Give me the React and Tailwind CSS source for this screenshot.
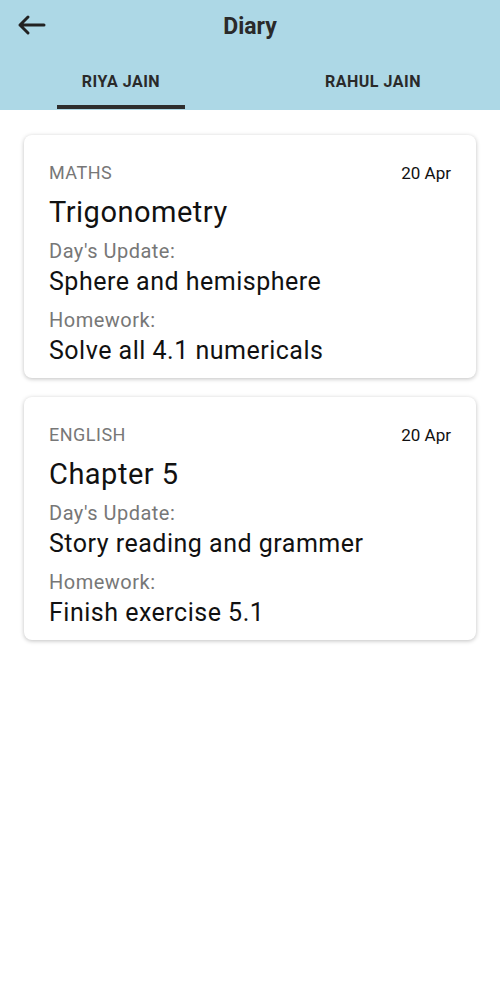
import React from "react";

const entries = [
  {
    subject: "MATHS",
    date: "20 Apr",
    title: "Trigonometry",
    update: "Sphere and hemisphere",
    homework: "Solve all 4.1 numericals",
  },
  {
    subject: "ENGLISH",
    date: "20 Apr",
    title: "Chapter 5",
    update: "Story reading and grammer",
    homework: "Finish exercise 5.1",
  },
];

function BackArrow() {
  return (
    <svg width="30" height="22" viewBox="0 0 30 22" fill="none">
      <path
        d="M28 11H4M12 3L4 11L12 19"
        stroke="#222"
        strokeWidth="3"
        strokeLinecap="round"
        strokeLinejoin="round"
      />
    </svg>
  );
}

function DiaryCard({ item }) {
  return (
    <div className="mx-6 rounded-lg bg-white pl-[25px] pr-[25px] pt-[26px] pb-[11px] tracking-[0.5px] shadow-[0_1px_4px_rgba(0,0,0,0.25)]">
      <div className="flex items-start justify-between">
        <div className="text-[18px] leading-[24px] text-[#777]">{item.subject}</div>
        <div className="text-[17px] leading-[24px] tracking-normal text-[#111]">{item.date}</div>
      </div>
      <div className="mt-[9px] text-[29px] leading-[36px] text-[#111]">{item.title}</div>
      <div className="mt-[7px] text-[20px] leading-[28px] text-[#777]">Day's Update:</div>
      <div className="mt-px text-[25px] leading-[32px] text-[#111]">{item.update}</div>
      <div className="mt-[8px] text-[20px] leading-[28px] text-[#777]">Homework:</div>
      <div className="mt-px text-[25px] leading-[32px] text-[#111]">{item.homework}</div>
    </div>
  );
}

export default function App() {
  return (
    <div className="min-h-screen w-[500px] overflow-hidden bg-white font-['Roboto',sans-serif]">
      <div className="overflow-hidden bg-[#add8e6]">
        <div className="relative flex h-[50px] justify-center pt-[13px]">
          <button className="absolute left-[16px] top-[14px]">
            <BackArrow />
          </button>
          <div className="text-[23px] font-bold leading-[28px] text-[#2a2a2a]">Diary</div>
        </div>
        <div className="-ml-[5px] grid w-[504px] grid-cols-2 tracking-[0.5px]">
          <div className="flex flex-col items-center pt-[22px]">
            <div className="text-[16px] font-bold leading-[20px] text-[#2a2a2a]">RIYA JAIN</div>
            <div className="mt-[13px] h-1 w-32 bg-[#2e2e2e]" />
            <div className="h-px" />
          </div>
          <div className="flex flex-col items-center pt-[22px]">
            <div className="text-[16px] font-bold leading-[20px] text-[#2a2a2a]">RAHUL JAIN</div>
            <div className="mt-[13px] h-1 w-32" />
            <div className="h-px" />
          </div>
        </div>
      </div>
      <div className="flex flex-col gap-[19px] pt-[25px]">
        {entries.map((item) => (
          <DiaryCard key={item.subject} item={item} />
        ))}
      </div>
    </div>
  );
}
